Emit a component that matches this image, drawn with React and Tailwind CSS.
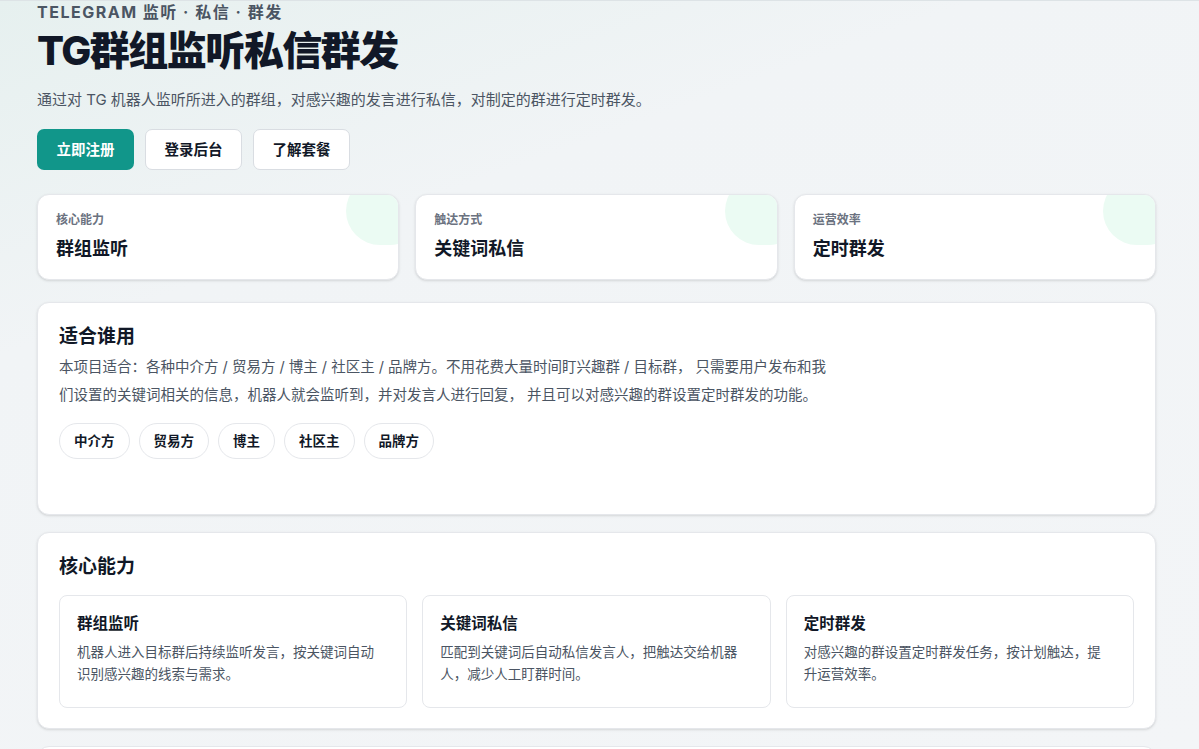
export default function App() {
  const font = { fontFamily: '"Inter","Noto Sans CJK SC",sans-serif' };
  const stats = [["核心能力","群组监听"],["触达方式","关键词私信"],["运营效率","定时群发"]];
  const tags = ["中介方","贸易方","博主","社区主","品牌方"];
  const caps = [
    ["群组监听","机器人进入目标群后持续监听发言，按关键词自动识别感兴趣的线索与需求。"],
    ["关键词私信","匹配到关键词后自动私信发言人，把触达交给机器人，减少人工盯群时间。"],
    ["定时群发","对感兴趣的群设置定时群发任务，按计划触达，提升运营效率。"],
  ];
  return (
    <div style={font} className="h-[749px] overflow-hidden bg-[linear-gradient(160deg,#e6f0ef_0%,#f1f4f6_30%,#f3f5f7_100%)] border-t border-[#dde3e6]">
      <div className="w-[1119px] ml-[37px]">
        <div className="text-[16px] font-bold tracking-[1.5px] text-[#4b5563] leading-[22px]">TELEGRAM 监听 · 私信 · 群发</div>
        <h1 className="text-[40px] font-extrabold text-[#111827] leading-[50px] mt-[3px] tracking-[-1.5px]">TG群组监听私信群发</h1>
        <p className="text-[15px] text-[#4b5563] mt-[12px] leading-[24px]">通过对 TG 机器人监听所进入的群组，对感兴趣的发言进行私信，对制定的群进行定时群发。</p>
        <div className="flex gap-[11px] mt-[17px]">
          <button className="h-[41px] w-[97px] rounded-[7px] bg-[#11968a] text-white text-[14.5px] font-bold">立即注册</button>
          <button className="h-[41px] w-[97px] rounded-[7px] bg-white border border-[#d9dde2] text-[#111827] text-[14.5px] font-bold">登录后台</button>
          <button className="h-[41px] w-[97px] rounded-[7px] bg-white border border-[#d9dde2] text-[#111827] text-[14.5px] font-bold">了解套餐</button>
        </div>
        <div className="grid grid-cols-3 gap-[16px] mt-[24px]">
          {stats.map(([a,b]) => (
            <div key={a} className="relative overflow-hidden h-[86px] bg-white rounded-[12px] border border-[#e5e7eb] shadow-sm px-[18px] pt-[16px]">
              <div className="absolute right-[-26px] top-[-18px] w-[78px] h-[68px] rounded-full bg-[#ebfbf3]" />
              <div className="relative text-[12px] font-semibold text-[#6b7280]">{a}</div>
              <div className="relative text-[18px] font-bold text-[#111827] mt-[6px]">{b}</div>
            </div>
          ))}
        </div>
        <div className="mt-[22px] bg-white rounded-[12px] border border-[#e5e7eb] shadow-sm px-[21px] pt-[20px] h-[213px]">
          <h2 className="text-[19px] font-bold text-[#111827] leading-[28px]">适合谁用</h2>
          <p className="text-[14.5px] text-[#4b5563] leading-[28px] mt-[2px] w-[770px]">本项目适合：各种中介方 / 贸易方 / 博主 / 社区主 / 品牌方。不用花费大量时间盯兴趣群 / 目标群， 只需要用户发布和我们设置的关键词相关的信息，机器人就会监听到，并对发言人进行回复， 并且可以对感兴趣的群设置定时群发的功能。</p>
          <div className="flex gap-[9px] mt-[14px]">
            {tags.map(t => <span key={t} className="h-[36px] px-[14px] flex items-center rounded-full border border-[#e5e7eb] text-[13.5px] font-bold text-[#111827]">{t}</span>)}
          </div>
        </div>
        <div className="mt-[17px] bg-white rounded-[12px] border border-[#e5e7eb] shadow-sm px-[21px] pt-[20px] pb-[20px]">
          <h2 className="text-[19px] font-bold text-[#111827] leading-[28px]">核心能力</h2>
          <div className="grid grid-cols-3 gap-[15px] mt-[14px]">
            {caps.map(([a,b]) => (
              <div key={a} className="rounded-[8px] border border-[#e5e7eb] px-[17px] pt-[16px] h-[113px]">
                <div className="text-[15.5px] font-bold text-[#111827] leading-[24px]">{a}</div>
                <div className="text-[13.5px] text-[#4b5563] leading-[22px] mt-[5px] pr-[6px]">{b}</div>
              </div>
            ))}
          </div>
        </div>
        <div className="mt-[17px] bg-white rounded-[12px] border border-[#e5e7eb] h-[40px]" />
      </div>
    </div>
  );
}
